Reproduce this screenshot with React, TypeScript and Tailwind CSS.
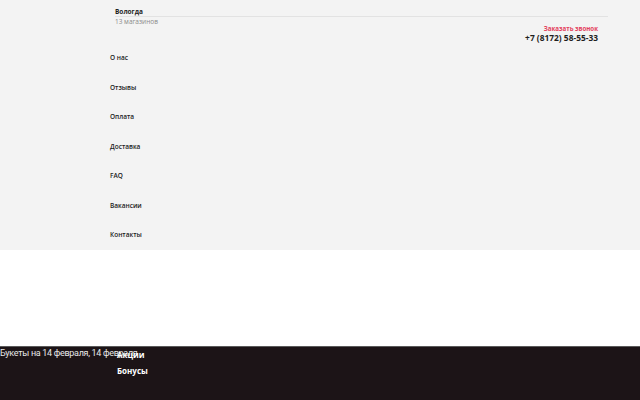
import React from "react";

const links = ["О нас", "Отзывы", "Оплата", "Доставка", "FAQ", "Вакансии", "Контакты"];

export default function App() {
  return (
    <div className="w-[640px] h-[400px] overflow-hidden bg-white" style={{ fontFamily: '"Open Sans", sans-serif' }}>
      <div className="h-[250px] bg-[#f3f3f3] flex flex-col">
        <div className="pl-[115px] pr-[32px] pt-[7px]">
          <div className="text-[6.5px] leading-[9px] font-bold text-[#222]">Вологда</div>
          <div className="border-t border-[#e2e2e2]" />
          <div className="text-[6.5px] leading-[9px] text-[#8a8a8a]">13 магазинов</div>
        </div>
        <div className="flex flex-col items-end pr-[42px] -mt-[1px]">
          <div className="text-[6.2px] leading-[8px] font-bold text-[#e3405c]">Заказать звонок</div>
          <div className="text-[8.4px] leading-[10px] font-bold text-[#1e1e1e]">+7 (8172) 58-55-33</div>
        </div>
        <div className="flex flex-col pl-[110px] mt-[10px] gap-[19.5px]">
          {links.map((l) => (
            <div key={l} className="text-[6.5px] leading-[10px] font-semibold text-[#222]">{l}</div>
          ))}
        </div>
      </div>
      <div className="h-[96px]" />
      <div className="h-[54px] bg-[#1c1417] border-t border-[#5a5a5a] relative">
        <div className="text-[9px] leading-[12px] tracking-[-0.3px] text-[#e8e8e8]" style={{ fontFamily: 'Roboto, sans-serif' }}>
          Букеты на 14 февраля, 14 февраля
        </div>
        <div className="absolute left-[117px] top-[2px] flex flex-col gap-[5px]">
          <div className="text-[8px] leading-[11px] font-bold text-white">Акции</div>
          <div className="text-[8px] leading-[11px] font-bold text-white">Бонусы</div>
        </div>
      </div>
    </div>
  );
}
